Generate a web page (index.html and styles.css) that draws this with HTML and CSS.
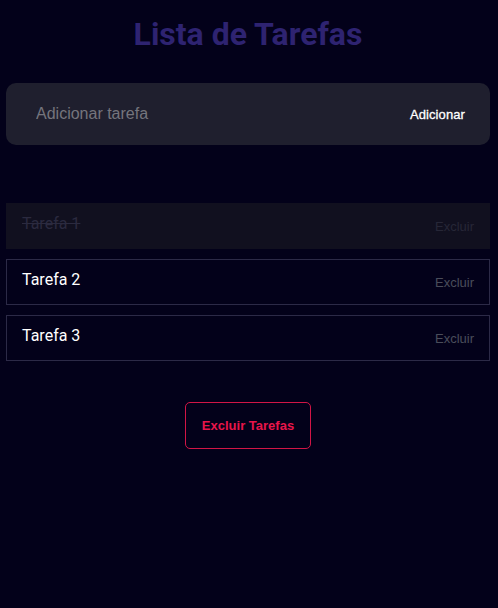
FILE: index.html
```html
<!DOCTYPE html>
<html lang="pt-BR">
<head>
<meta charset="utf-8">
<title>Lista de Tarefas</title>
<link rel="stylesheet" href="styles.css">
</head>
<body>
<div class="app">
  <h1 class="title">Lista de Tarefas</h1>
  <form class="add-form">
    <input class="add-input" type="text" placeholder="Adicionar tarefa">
    <button class="add-btn" type="button">Adicionar</button>
  </form>
  <ul class="tasks">
    <li class="task done"><span class="task-name">Tarefa 1</span><button class="del" type="button">Excluir</button></li>
    <li class="task"><span class="task-name">Tarefa 2</span><button class="del" type="button">Excluir</button></li>
    <li class="task"><span class="task-name">Tarefa 3</span><button class="del" type="button">Excluir</button></li>
  </ul>
  <div class="actions">
    <button class="clear-btn" type="button">Excluir Tarefas</button>
  </div>
</div>
</body>
</html>
```
FILE: styles.css
```css
html, body {
  margin: 0;
  padding: 0;
  background: #03011a;
  height: 100%;
}
.app {
  padding: 14px 8px 0 6px;
  font-family: Roboto, "Liberation Sans", sans-serif;
}
.title {
  margin: 0;
  text-align: center;
  color: #2e2371;
  font-size: 32px;
  font-weight: 700;
  line-height: 40px;
}
.add-form {
  margin-top: 29px;
  display: flex;
  align-items: center;
  background: #1f1f2e;
  border-radius: 10px;
  height: 62px;
  padding: 0 25px 0 30px;
}
.add-input {
  flex: 1;
  background: transparent;
  border: none;
  outline: none;
  color: #ddd;
  font-family: "Liberation Sans", Arial, sans-serif;
  font-size: 16px;
  padding: 0;
}
.add-input::placeholder {
  color: #75757d;
}
.add-btn {
  background: transparent;
  border: none;
  color: #ffffff;
  font-family: "Liberation Sans", Arial, sans-serif;
  font-size: 13px;
  padding: 0;
  letter-spacing: 0.1px;
  -webkit-text-stroke: 0.3px #ffffff;
}
.tasks {
  list-style: none;
  margin: 58px 0 0;
  padding: 0;
  display: flex;
  flex-direction: column;
  gap: 10px;
}
.task {
  display: flex;
  justify-content: space-between;
  align-items: center;
  height: 44px;
  border: 1px solid #2c2a47;
  padding: 0 15px 0 15px;
}
.task-name {
  color: #ffffff;
  font-size: 16px;
  margin-top: -6px;
}
.task.done {
  background: #11101f;
  border-color: #11101f;
}
.task.done .task-name {
  color: #2b2a3f;
  text-decoration: line-through;
}
.del {
  background: transparent;
  border: none;
  color: #4a4d5a;
  font-family: "Liberation Sans", Arial, sans-serif;
  font-size: 13px;
  padding: 0;
  margin-top: 0;
}
.task.done .del {
  color: #272737;
}
.actions {
  display: flex;
  justify-content: center;
  margin-top: 41px;
}
.clear-btn {
  width: 126px;
  height: 47px;
  background: transparent;
  border: 1px solid #d11546;
  border-radius: 5px;
  color: #e8154a;
  font-family: "Liberation Sans", Arial, sans-serif;
  font-size: 13px;
  font-weight: 700;
}
```
